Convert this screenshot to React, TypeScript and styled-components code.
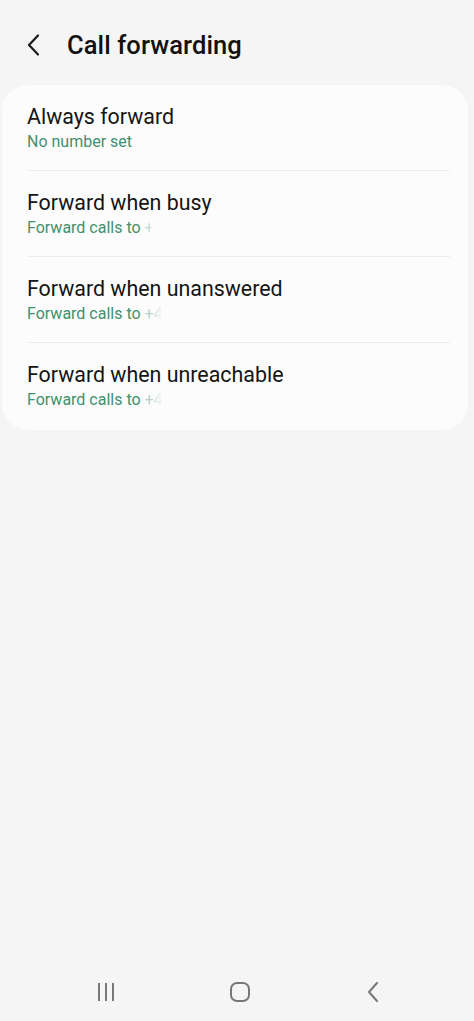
import React from "react";
import styled, { createGlobalStyle } from "styled-components";

const GlobalStyle = createGlobalStyle`
  html, body {
    margin: 0;
    padding: 0;
    background: #f5f5f5;
  }
  body {
    font-family: Roboto, "Noto Sans", "Liberation Sans", sans-serif;
    -webkit-font-smoothing: antialiased;
  }
`;

const Screen = styled.div`
  width: 474px;
  height: 1021px;
  display: flex;
  flex-direction: column;
  background: #f5f5f5;
  overflow: hidden;
`;

const Header = styled.header`
  height: 85px;
  display: flex;
  align-items: center;
  padding: 5px 0 0 26px;
  box-sizing: border-box;
  gap: 21px;
`;

const BackButton = styled.button`
  width: 20px;
  height: 28px;
  padding: 0;
  border: none;
  background: none;
  display: flex;
  align-items: center;
  justify-content: flex-start;
  color: #1a1a1a;
`;

const Title = styled.h1`
  margin: 0;
  font-size: 25.5px;
  font-weight: 500;
  color: #111;
  letter-spacing: 0.1px;
`;

const Card = styled.section`
  margin: 0 6px 0 2px;
  background: #fcfcfc;
  border-radius: 26px;
  padding: 0 18px 0 25px;
  display: flex;
  flex-direction: column;
`;

const Row = styled.div<{ $last?: boolean }>`
  height: 85px;
  display: flex;
  flex-direction: column;
  justify-content: center;
  gap: 2px;
  border-bottom: ${({ $last }) => ($last ? "none" : "1px solid #ededed")};
  padding-bottom: ${({ $last }) => ($last ? "2px" : "0")};
`;

const RowTitle = styled.div`
  font-size: 21.4px;
  color: #151515;
  line-height: 27px;
`;

const RowSub = styled.div`
  font-size: 16px;
  color: #41906e;
  line-height: 20px;
  display: flex;
  align-items: center;
`;

const Fade = styled.span`
  margin-left: 4px;
  color: #b9d2c6;
  -webkit-mask-image: linear-gradient(90deg, #000 30%, transparent 100%);
  mask-image: linear-gradient(90deg, #000 30%, transparent 100%);
`;

const Spacer = styled.div`
  flex: 1;
`;

const NavBar = styled.nav`
  height: 58px;
  display: flex;
  align-items: center;
  justify-content: space-between;
  padding: 0 88px 0 93px;
`;

const NavIcon = styled.div`
  width: 26px;
  height: 26px;
  display: flex;
  align-items: center;
  justify-content: center;
  color: #777;
`;

const rows = [
  { title: "Always forward", sub: "No number set" },
  { title: "Forward when busy", sub: "Forward calls to", tail: "+" },
  { title: "Forward when unanswered", sub: "Forward calls to", tail: "+4" },
  { title: "Forward when unreachable", sub: "Forward calls to", tail: "+4" },
];

const App: React.FC = () => {
  return (
    <Screen>
      <GlobalStyle />
      <Header>
        <BackButton aria-label="Back">
          <svg width="14" height="24" viewBox="0 0 14 24" fill="none">
            <path d="M12 2.5 L3 12 L12 21.5" stroke="currentColor" strokeWidth="2.2" strokeLinecap="round" strokeLinejoin="round" />
          </svg>
        </BackButton>
        <Title>Call forwarding</Title>
      </Header>
      <Card>
        {rows.map((r, i) => (
          <Row key={r.title} $last={i === rows.length - 1}>
            <RowTitle>{r.title}</RowTitle>
            <RowSub>
              {r.sub}
              {r.tail && <Fade>{r.tail}</Fade>}
            </RowSub>
          </Row>
        ))}
      </Card>
      <Spacer />
      <NavBar>
        <NavIcon>
          <svg width="22" height="22" viewBox="0 0 22 22" fill="none">
            <path d="M4 2 V20 M11 2 V20 M18 2 V20" stroke="currentColor" strokeWidth="2" />
          </svg>
        </NavIcon>
        <NavIcon>
          <svg width="22" height="22" viewBox="0 0 22 22" fill="none">
            <rect x="2" y="2" width="18" height="18" rx="6" stroke="currentColor" strokeWidth="2" />
          </svg>
        </NavIcon>
        <NavIcon>
          <svg width="14" height="22" viewBox="0 0 14 22" fill="none">
            <path d="M11 2 L3 11 L11 20" stroke="currentColor" strokeWidth="2" strokeLinecap="round" strokeLinejoin="round" />
          </svg>
        </NavIcon>
      </NavBar>
    </Screen>
  );
};

export default App;
